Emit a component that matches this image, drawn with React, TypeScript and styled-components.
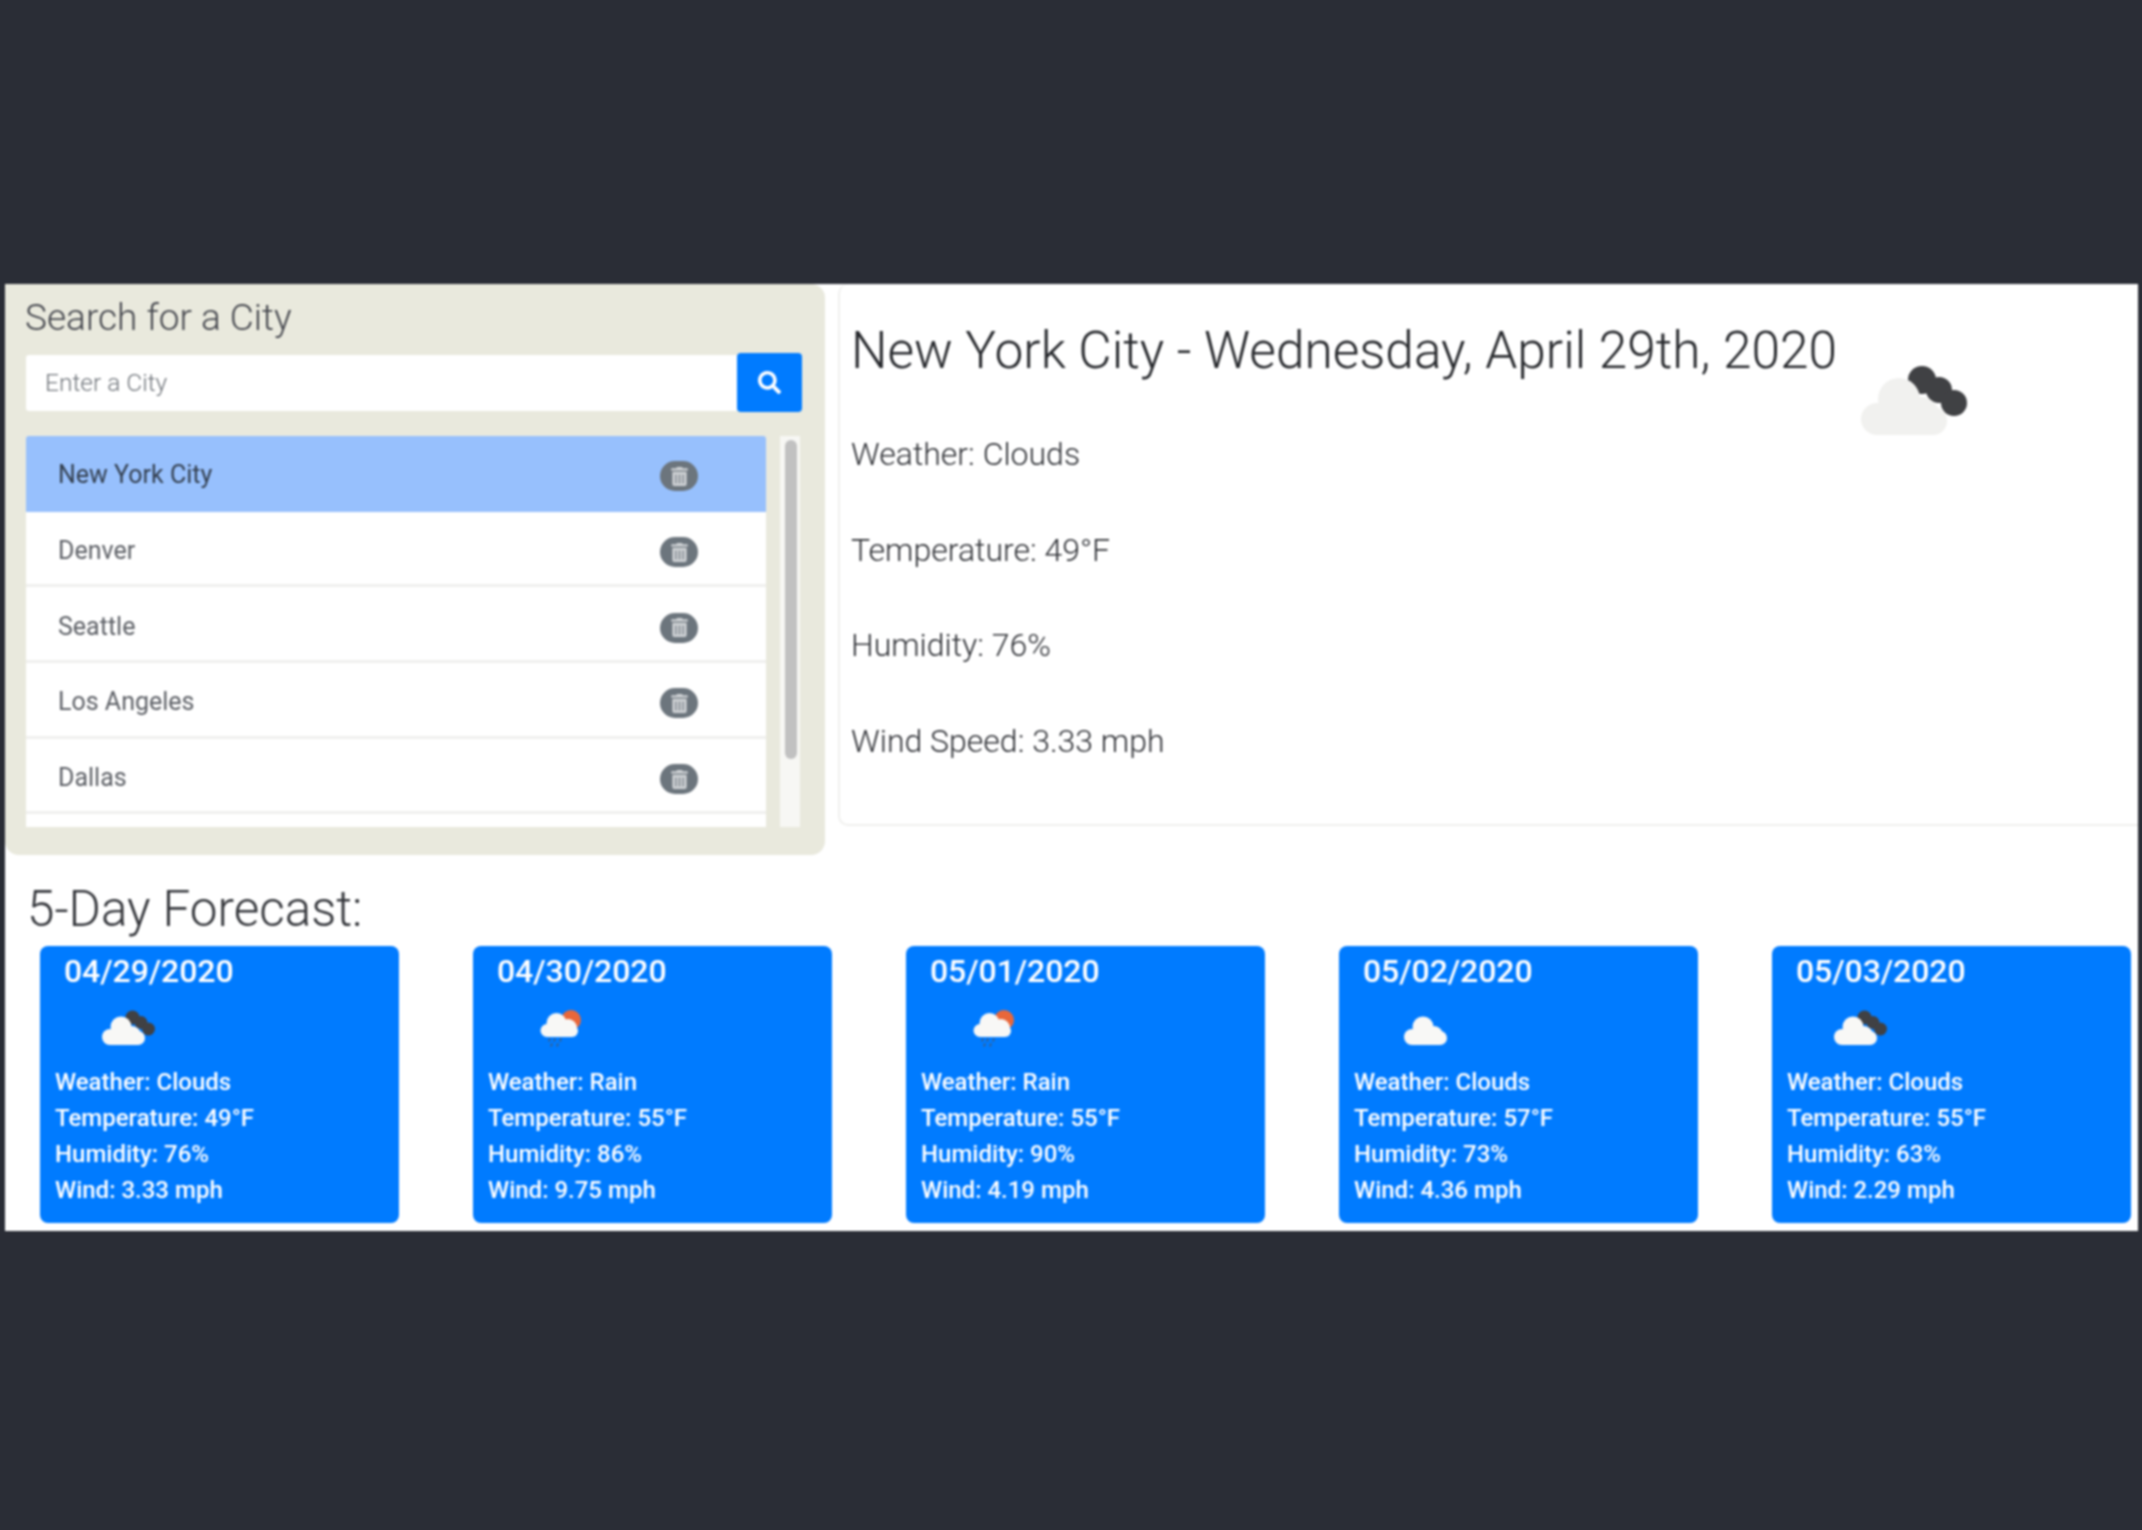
import React from "react";
import styled, { createGlobalStyle } from "styled-components";
import { FaSearch, FaTrashAlt } from "react-icons/fa";

const GlobalStyle = createGlobalStyle`
    html, body {
        margin: 0;
        background-color: #2a2d36;
    }
    body {
        font-family: Roboto, "Liberation Sans", sans-serif;
        padding: 284px 4px 300px 5px;
    }
`;

const Screen = styled.div`
    background-color: white;
    padding-bottom: 8px;
    filter: blur(1px);
`;

const TopRow = styled.div`
    display: flex;
    align-items: flex-start;
    gap: 13px;
`;

const SearchPanel = styled.div`
    flex: 0 0 820px;
    box-sizing: border-box;
    height: 571px;
    padding: 12px 23px 28px 21px;
    background-color: #e9e9dd;
    border-radius: 0 14px 14px 14px;
`;

const PanelTitle = styled.h4`
    margin: 0 0 0 -1px;
    font-size: 37px;
    line-height: 44px;
    font-weight: 300;
    color: #44464d;
`;

const SearchRow = styled.div`
    display: flex;
    align-items: center;
    margin-top: 13px;
`;

const CityInput = styled.input`
    flex: 1;
    min-width: 0;
    box-sizing: border-box;
    height: 56px;
    padding: 0 19px;
    border: none;
    border-radius: 3px 0 0 3px;
    background-color: white;
    font-family: inherit;
    font-size: 24.5px;
    font-weight: 300;
    &::placeholder {
        color: #70757b;
        opacity: 1;
    }
`;

const SearchButton = styled.button`
    flex: 0 0 65px;
    height: 59px;
    display: flex;
    align-items: center;
    justify-content: center;
    border: none;
    border-radius: 4px;
    background-color: #007bff;
    color: white;
    font-size: 23px;
`;

const ListArea = styled.div`
    display: flex;
    gap: 14px;
    height: 391px;
    margin: 24px 2px 0 0;
`;

const CityList = styled.ul`
    flex: 1;
    list-style: none;
    margin: 0;
    padding: 0;
    overflow: hidden;
`;

const ScrollTrack = styled.div`
    flex: 0 0 20px;
    box-sizing: border-box;
    padding: 4px 3px 0 5px;
    background-color: #f7f7f4;
`;

const ScrollThumb = styled.div`
    height: 319px;
    border-radius: 6px;
    background-color: #c1c1c1;
`;

const CityItem = styled.li<{ $active?: boolean }>`
    box-sizing: border-box;
    height: 75.7px;
    padding: 5px 68px 0 32px;
    display: flex;
    align-items: center;
    justify-content: space-between;
    background-color: ${(props) => (props.$active ? "#97c0fd" : "white")};
    border-bottom: 3px solid ${(props) => (props.$active ? "#97c0fd" : "#f0f0ee")};
    border-radius: ${(props) => (props.$active ? "3px 3px 0 0" : "0")};
    color: ${(props) => (props.$active ? "#333f4f" : "#5d6066")};
    font-size: 25px;
`;

const TrashBadge = styled.span`
    width: 38px;
    height: 30px;
    margin-top: 3px;
    display: flex;
    align-items: center;
    justify-content: center;
    border-radius: 15px;
    background-color: #6c757d;
    color: #d0d3d6;
    font-size: 19px;
`;

const WeatherCard = styled.div`
    flex: 1;
    box-sizing: border-box;
    height: 542px;
    padding: 37px 14px 0 11px;
    border: 2px solid #f0f0ee;
    border-top-width: 0;
    border-right-width: 0;
    border-radius: 10px 0 0 10px;
`;

const CardHeader = styled.div`
    display: flex;
    align-items: flex-start;
    height: 110px;
    gap: 22px;
`;

const CityTitle = styled.h2`
    margin: 0;
    font-size: 51.4px;
    line-height: 60px;
    font-weight: 300;
    color: #26282c;
`;

const HeaderIcon = styled.div`
    margin-top: 44px;
`;

const WeatherLine = styled.p`
    margin: 0 0 48px;
    font-size: 32px;
    line-height: 47.7px;
    font-weight: 300;
    color: #2e3035;
`;

const ForecastHeading = styled.h3`
    margin: 25px 0 0 22px;
    font-size: 49.4px;
    line-height: 58px;
    font-weight: 300;
    color: #33353a;
`;

const ForecastRow = styled.div`
    display: flex;
    gap: 74px;
    margin-top: 8px;
    padding-left: 35px;
`;

const ForecastCard = styled.div`
    flex: 0 0 359px;
    box-sizing: border-box;
    height: 277px;
    padding: 1px 15px 0;
    border-radius: 8px;
    background-color: #007bff;
    color: white;
`;

const ForecastDate = styled.div`
    margin-left: 9px;
    font-size: 32px;
    line-height: 48px;
    font-weight: 500;
    letter-spacing: -0.1px;
`;

const ForecastIcon = styled.div<{ $plain?: boolean }>`
    height: 40px;
    margin: 15px 0 14px ${(props) => (props.$plain ? "49px" : "46px")};
`;

const ForecastLine = styled.div`
    font-size: 24px;
    line-height: 36px;
    font-weight: 500;
`;

function CloudIcon({ width, fill, dark = true }: { width: number; fill: string; dark?: boolean }) {
    return (
        <svg width={width} viewBox="0 0 110 80" style={{ display: "block" }}>
            {dark && (
                <g fill="#404144">
                    <circle cx="63" cy="15" r="14" />
                    <circle cx="80" cy="25" r="13" />
                    <circle cx="95" cy="38" r="13" />
                </g>
            )}
            <g fill={fill}>
                <circle cx="18" cy="54" r="16" />
                <circle cx="40" cy="34" r="21" />
                <circle cx="62" cy="50" r="18" />
                <circle cx="74" cy="56" r="14" />
                <rect x="18" y="45" width="56" height="25" />
            </g>
        </svg>
    );
}

function RainIcon({ width }: { width: number }) {
    return (
        <svg width={width} viewBox="0 0 110 80" style={{ display: "block" }}>
            <circle cx="74" cy="20" r="20" fill="#e8673a" />
            <g fill="#f8f8f6">
                <circle cx="26" cy="41" r="13" />
                <circle cx="45" cy="26" r="20" />
                <circle cx="68" cy="36" r="18" />
                <circle cx="76" cy="42" r="12" />
                <rect x="26" y="36" width="50" height="18" />
            </g>
            <g stroke="#4b5563" strokeWidth="2.5">
                <path d="M32 57 L30 63 M42 57 L40 63 M54 57 L52 63 M36 67 L34 73 M48 67 L46 73" />
            </g>
        </svg>
    );
}

const CITIES = ["New York City", "Denver", "Seattle", "Los Angeles", "Dallas", ""];

const FORECAST = [
    { date: "04/29/2020", weather: "Clouds", temp: 49, humidity: 76, wind: "3.33", dark: true },
    { date: "04/30/2020", weather: "Rain", temp: 55, humidity: 86, wind: "9.75", dark: false },
    { date: "05/01/2020", weather: "Rain", temp: 55, humidity: 90, wind: "4.19", dark: false },
    { date: "05/02/2020", weather: "Clouds", temp: 57, humidity: 73, wind: "4.36", dark: false },
    { date: "05/03/2020", weather: "Clouds", temp: 55, humidity: 63, wind: "2.29", dark: true },
];

export default function App() {
    return (
        <>
            <GlobalStyle />
            <Screen>
                <TopRow>
                    <SearchPanel>
                        <PanelTitle>Search for a City</PanelTitle>
                        <SearchRow>
                            <CityInput placeholder="Enter a City" />
                            <SearchButton>
                                <FaSearch />
                            </SearchButton>
                        </SearchRow>
                        <ListArea>
                            <CityList>
                                {CITIES.map((city, index) => (
                                    <CityItem key={index} $active={index === 0}>
                                        {city}
                                        {city && (
                                            <TrashBadge>
                                                <FaTrashAlt />
                                            </TrashBadge>
                                        )}
                                    </CityItem>
                                ))}
                            </CityList>
                            <ScrollTrack>
                                <ScrollThumb />
                            </ScrollTrack>
                        </ListArea>
                    </SearchPanel>
                    <WeatherCard>
                        <CardHeader>
                            <CityTitle>New York City - Wednesday, April 29th, 2020</CityTitle>
                            <HeaderIcon>
                                <CloudIcon width={110} fill="#f1f1ef" />
                            </HeaderIcon>
                        </CardHeader>
                        <WeatherLine>Weather: Clouds</WeatherLine>
                        <WeatherLine>Temperature: 49°F</WeatherLine>
                        <WeatherLine>Humidity: 76%</WeatherLine>
                        <WeatherLine>Wind Speed: 3.33 mph</WeatherLine>
                    </WeatherCard>
                </TopRow>
                <ForecastHeading>5-Day Forecast:</ForecastHeading>
                <ForecastRow>
                    {FORECAST.map((day) => (
                        <ForecastCard key={day.date}>
                            <ForecastDate>{day.date}</ForecastDate>
                            <ForecastIcon $plain={day.weather === "Clouds" && !day.dark}>
                                {day.weather === "Rain" ? (
                                    <RainIcon width={55} />
                                ) : (
                                    <CloudIcon width={55} fill="#f8f8f6" dark={day.dark} />
                                )}
                            </ForecastIcon>
                            <ForecastLine>Weather: {day.weather}</ForecastLine>
                            <ForecastLine>Temperature: {day.temp}°F</ForecastLine>
                            <ForecastLine>Humidity: {day.humidity}%</ForecastLine>
                            <ForecastLine>Wind: {day.wind} mph</ForecastLine>
                        </ForecastCard>
                    ))}
                </ForecastRow>
            </Screen>
        </>
    );
}
